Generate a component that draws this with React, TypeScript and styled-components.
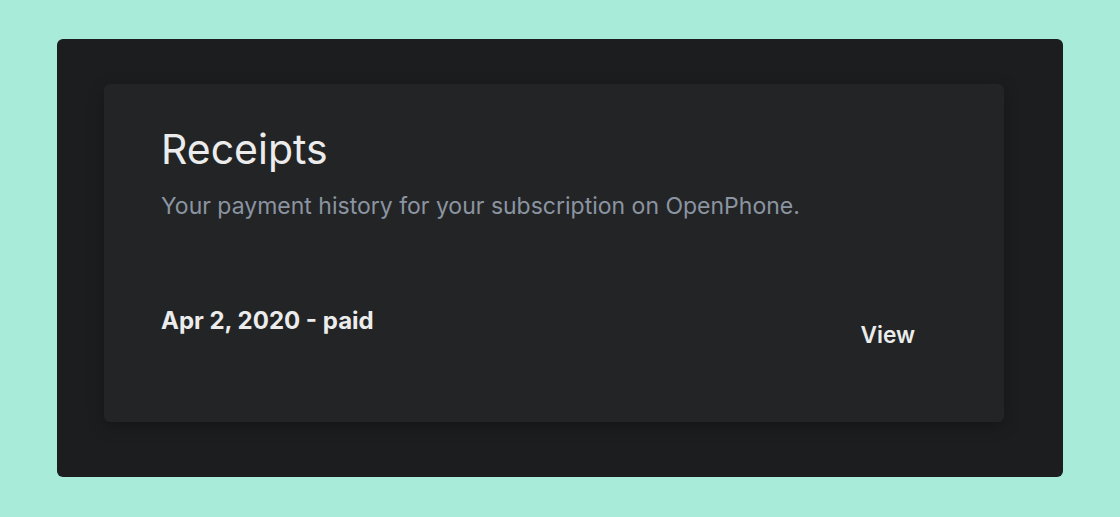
import React from 'react'
import styled, { createGlobalStyle } from 'styled-components'

const GlobalStyle = createGlobalStyle`
  html, body {
    margin: 0;
    padding: 0;
    background: #a9ebd9;
    font-family: Inter, "Noto Sans", "Liberation Sans", sans-serif;
    -webkit-font-smoothing: antialiased;
  }
`

const Page = styled.div`
  width: 1120px;
  height: 517px;
  padding: 39px 0 0 57px;
  box-sizing: border-box;
`

const Frame = styled.div`
  width: 1006px;
  height: 438px;
  box-sizing: border-box;
  padding: 45px 0 0 47px;
  background: #1c1d1f;
  border-radius: 6px;
`

const Card = styled.section`
  width: 900px;
  height: 338px;
  box-sizing: border-box;
  padding: 40px 57px 0 57px;
  background: #232426;
  border-radius: 6px;
  box-shadow: 0 4px 16px rgba(0, 0, 0, 0.25);
  display: flex;
  flex-direction: column;
`

const Title = styled.h2`
  margin: 0;
  font-size: 41px;
  line-height: 50px;
  font-weight: 400;
  color: #ececec;
`

const Subtitle = styled.p`
  margin: 18px 0 0;
  font-size: 23px;
  line-height: 28px;
  color: #8b94a1;
`

const ReceiptRow = styled.div`
  margin-top: 86px;
  display: flex;
  justify-content: space-between;
  align-items: flex-start;
`

const ReceiptLabel = styled.span`
  font-size: 24px;
  line-height: 30px;
  font-weight: 700;
  color: #ececec;
`

const ViewButton = styled.button`
  margin: 15px 32px 0 0;
  padding: 0;
  border: none;
  background: transparent;
  font-family: inherit;
  font-size: 22.7px;
  line-height: 28px;
  font-weight: 600;
  color: #ececec;
  cursor: pointer;
`

export default function App() {
  return (
    <>
      <GlobalStyle />
      <Page>
        <Frame>
          <Card>
            <Title>Receipts</Title>
            <Subtitle>Your payment history for your subscription on OpenPhone.</Subtitle>
            <ReceiptRow>
              <ReceiptLabel>Apr 2, 2020 - paid</ReceiptLabel>
              <ViewButton>View</ViewButton>
            </ReceiptRow>
          </Card>
        </Frame>
      </Page>
    </>
  )
}
